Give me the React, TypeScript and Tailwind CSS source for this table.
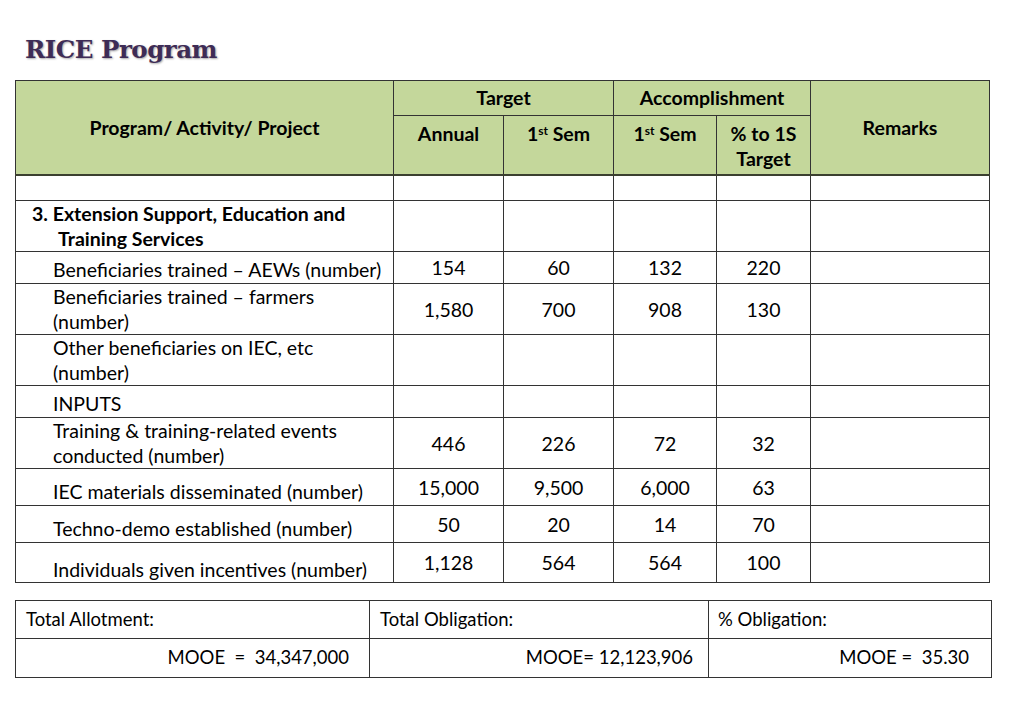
import React from "react";

type Row = {
  label: React.ReactNode;
  h: string;
  labelPad?: string;
  vals?: string[];
};

const rows: Row[] = [
  { label: "", h: "h-[26px]" },
  {
    label: (
      <div className="pl-[42px] -indent-[26px] font-bold leading-[25px]">
        3. Extension Support, Education and
        <br />
        Training Services
      </div>
    ),
    h: "h-[51px]",
  },
  { label: "Beneficiaries trained – AEWs (number)", h: "h-[32px]", labelPad: "pt-[3px]", vals: ["154", "60", "132", "220"] },
  {
    label: (
      <>
        Beneficiaries trained – farmers
        <br />
        (number)
      </>
    ),
    h: "h-[51px]",
    vals: ["1,580", "700", "908", "130"],
  },
  {
    label: (
      <>
        Other beneficiaries on IEC, etc
        <br />
        (number)
      </>
    ),
    h: "h-[51px]",
  },
  { label: "INPUTS", h: "h-[32px]", labelPad: "pt-[4px]" },
  {
    label: (
      <>
        Training &amp; training-related events
        <br />
        conducted (number)
      </>
    ),
    h: "h-[51px]",
    vals: ["446", "226", "72", "32"],
  },
  { label: "IEC materials disseminated (number)", h: "h-[37px]", labelPad: "pt-[8px]", vals: ["15,000", "9,500", "6,000", "63"] },
  { label: "Techno-demo established (number)", h: "h-[37px]", labelPad: "pt-[9px]", vals: ["50", "20", "14", "70"] },
  { label: "Individuals given incentives (number)", h: "h-[37px]", labelPad: "pt-[14px]", vals: ["1,128", "564", "564", "100"] },
];

const cell = "border border-[#333] p-0";
const hdr = "border border-[#333] bg-[#c4d79b] font-bold text-center";
const sub = `${hdr} align-top pt-[5px] leading-[25px] border-b-2 border-b-[#3b4030]`;

function Sem() {
  return (
    <>
      1<span className="text-[12px] align-top relative top-[-3px]">st</span> Sem
    </>
  );
}

export default function App() {
  return (
    <div className="w-[1023px] h-[708px] bg-white text-black font-['Lato','Open_Sans',sans-serif] text-[19.5px]">
      <div className="pt-[32px] pl-[25px] h-[80px]">
        <h1 className="font-['DejaVu_Serif',serif] font-bold text-[24.5px] leading-[36px] text-[#3e2c56] tracking-[-0.5px] [text-shadow:1px_1px_2px_rgba(0,0,0,0.35)]">
          RICE Program
        </h1>
      </div>

      <table className="ml-[15px] w-[974px] table-fixed border-collapse">
        <colgroup>
          <col className="w-[378px]" />
          <col className="w-[110px]" />
          <col className="w-[110px]" />
          <col className="w-[103px]" />
          <col className="w-[94px]" />
          <col className="w-[179px]" />
        </colgroup>
        <thead>
          <tr className="h-[35px]">
            <th rowSpan={2} className={`${hdr} align-middle border-b-2 border-b-[#3b4030]`}>
              Program/ Activity/ Project
            </th>
            <th colSpan={2} className={`${hdr} align-middle`}>Target</th>
            <th colSpan={2} className={`${hdr} align-middle`}>Accomplishment</th>
            <th rowSpan={2} className={`${hdr} align-middle border-b-2 border-b-[#3b4030]`}>Remarks</th>
          </tr>
          <tr className="h-[59px]">
            <th className={sub}>Annual</th>
            <th className={sub}><Sem /></th>
            <th className={sub}><Sem /></th>
            <th className={sub}>
              % to 1S
              <br />
              Target
            </th>
          </tr>
        </thead>
        <tbody>
          {rows.map((r, i) => (
            <tr key={i} className={r.h}>
              <td className={`${cell} align-middle leading-[25px] ${i === 1 ? "pl-0" : `pl-[37px] ${r.labelPad ?? ""}`}`}>
                {r.label}
              </td>
              {[0, 1, 2, 3].map((j) => (
                <td key={j} className={`${cell} text-center align-middle leading-[25px]`}>
                  {r.vals ? r.vals[j] : ""}
                </td>
              ))}
              <td className={cell} />
            </tr>
          ))}
        </tbody>
      </table>

      <table className="ml-[15px] mt-[17px] w-[976px] table-fixed border-collapse text-[18.5px]">
        <colgroup>
          <col className="w-[354px]" />
          <col className="w-[339px]" />
          <col className="w-[283px]" />
        </colgroup>
        <tbody>
          <tr className="h-[38px]">
            <td className="border border-[#333] pl-[10px] align-middle">Total Allotment:</td>
            <td className="border border-[#333] pl-[10px] align-middle">Total Obligation:</td>
            <td className="border border-[#333] pl-[9px] align-middle">% Obligation:</td>
          </tr>
          <tr className="h-[39px]">
            <td className="border border-[#333] pr-[20px] text-right align-middle whitespace-pre">MOOE  =  34,347,000</td>
            <td className="border border-[#333] pr-[15px] text-right align-middle whitespace-pre">MOOE= 12,123,906</td>
            <td className="border border-[#333] pr-[22px] text-right align-middle whitespace-pre">MOOE =  35.30</td>
          </tr>
        </tbody>
      </table>
    </div>
  );
}
